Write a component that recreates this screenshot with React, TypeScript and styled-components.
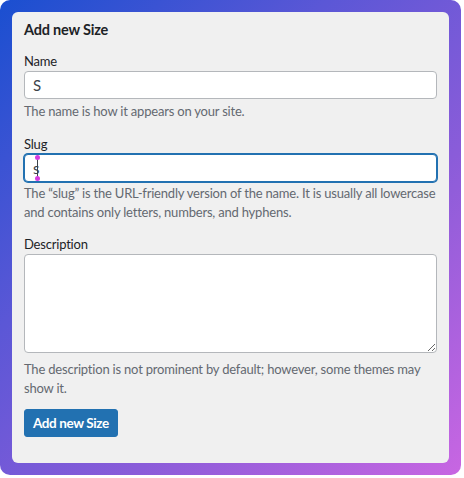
import React from "react";
import styled, { createGlobalStyle } from "styled-components";

const Global = createGlobalStyle`
  html, body { margin: 0; padding: 0; background: #fff; }
  body { font-family: Lato, "Noto Sans", sans-serif; }
  * { box-sizing: border-box; }
`;

const Frame = styled.div`
  width: 461px;
  height: 475px;
  padding: 12px;
  border-radius: 10px;
  background: linear-gradient(135deg, #1a4fd0 0%, #5b57d6 35%, #8a5cd9 65%, #c866e2 100%);
`;

const Card = styled.form`
  display: flex;
  flex-direction: column;
  height: 100%;
  padding: 8px 12px 0 12px;
  border-radius: 6px;
  background: #f0f0f0;
  color: #1d2327;
`;

const Title = styled.h2`
  margin: 0;
  font-size: 14.5px;
  line-height: 20px;
  font-weight: 700;
  letter-spacing: -0.2px;
`;

const Field = styled.div<{ $gap: number }>`
  display: flex;
  flex-direction: column;
  margin-top: ${({ $gap }) => $gap}px;
`;

const Label = styled.label`
  font-size: 13px;
  line-height: 17px;
  letter-spacing: -0.2px;
  margin-bottom: 1px;
`;

const InputWrap = styled.div`
  position: relative;
`;

const TextInput = styled.input<{ $focus?: boolean }>`
  display: block;
  width: 100%;
  height: 28px;
  padding: 0 8px;
  font: inherit;
  font-size: 15px;
  color: #3c434a;
  background: #fff;
  border: 1px solid ${({ $focus }) => ($focus ? "#2271b1" : "#b4b7bb")};
  box-shadow: ${({ $focus }) => ($focus ? "0 0 0 1px #2271b1" : "none")};
  border-radius: 4px;
  outline: none;
`;

const TextArea = styled.textarea`
  display: block;
  width: 100%;
  height: 99px;
  font: inherit;
  background: #fff;
  border: 1px solid #b4b7bb;
  border-radius: 4px;
  outline: none;
  resize: vertical;
`;

const Help = styled.p<{ $gap: number }>`
  margin: ${({ $gap }) => $gap}px 0 0 0;
  font-size: 13px;
  line-height: 19px;
  letter-spacing: -0.2px;
  color: #646970;
`;

const Caret = styled.span`
  position: absolute;
  left: 13px;
  top: 4px;
  width: 1px;
  height: 20px;
  background: #3c434a;
  &::before,
  &::after {
    content: "";
    position: absolute;
    left: -2px;
    width: 5px;
    height: 5px;
    border-radius: 50%;
    background: #d63ce0;
  }
  &::before { top: -3px; }
  &::after { bottom: -3px; }
`;

const Button = styled.button`
  align-self: flex-start;
  margin-top: 11px;
  height: 28px;
  padding: 0 8px;
  font: inherit;
  font-size: 13.5px;
  font-weight: 700;
  letter-spacing: -0.4px;
  color: #fff;
  background: #2271b1;
  border: 1px solid #2271b1;
  border-radius: 3px;
`;

export default function App() {
  return (
    <>
      <Global />
      <Frame>
        <Card onSubmit={(e) => e.preventDefault()}>
          <Title>Add new Size</Title>
          <Field $gap={13}>
            <Label>Name</Label>
            <TextInput defaultValue="S" />
            <Help $gap={3}>The name is how it appears on your site.</Help>
          </Field>
          <Field $gap={15}>
            <Label>Slug</Label>
            <InputWrap>
              <TextInput $focus defaultValue="s" />
              <Caret />
            </InputWrap>
            <Help $gap={2}>
              The “slug” is the URL-friendly version of the name. It is usually all lowercase and
              contains only letters, numbers, and hyphens.
            </Help>
          </Field>
          <Field $gap={14}>
            <Label>Description</Label>
            <TextArea />
            <Help $gap={7}>
              The description is not prominent by default; however, some themes may show it.
            </Help>
          </Field>
          <Button type="submit">Add new Size</Button>
        </Card>
      </Frame>
    </>
  );
}
